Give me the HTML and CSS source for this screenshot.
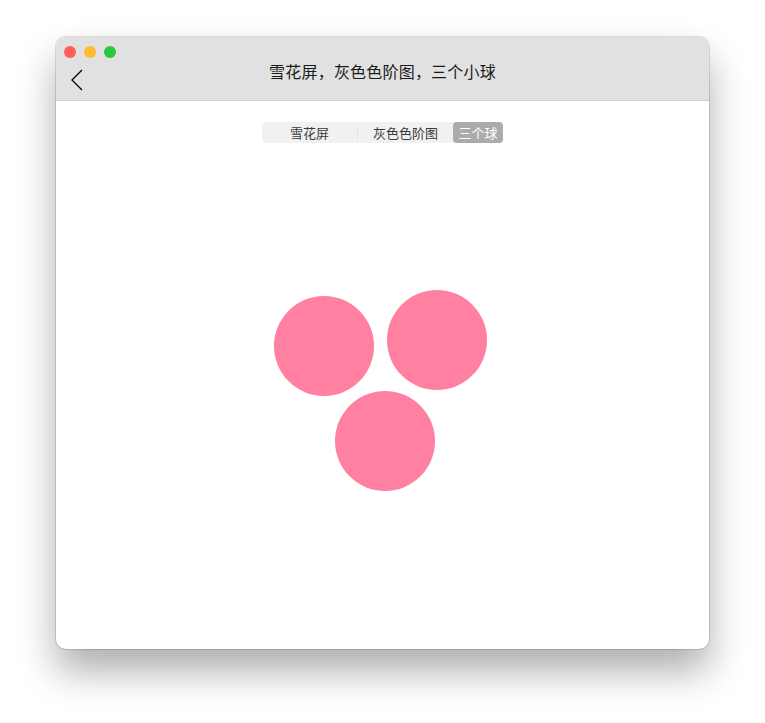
FILE: index.html
```html
<!DOCTYPE html>
<html lang="zh">
<head>
<meta charset="utf-8">
<link rel="stylesheet" href="styles.css">
</head>
<body>
<div class="window">
  <div class="titlebar">
    <div class="lights">
      <span class="light red"></span>
      <span class="light yellow"></span>
      <span class="light green"></span>
    </div>
    <div class="navrow">
      <svg class="back" width="14" height="22" viewBox="0 0 14 22"><path d="M12 1 L2 11 L12 21" fill="none" stroke="#000" stroke-width="1.3"/></svg>
      <div class="title">雪花屏，灰色色阶图，三个小球</div>
    </div>
  </div>
  <div class="content">
    <div class="segmented">
      <div class="seg seg-wide">雪花屏</div>
      <div class="sep"></div>
      <div class="seg seg-wide">灰色色阶图</div>
      <div class="seg seg-selected">三个球</div>
    </div>
    <div class="canvas">
      <div class="ball b1"></div>
      <div class="ball b2"></div>
      <div class="ball b3"></div>
    </div>
  </div>
</div>
</body>
</html>
```
FILE: styles.css
```css
html, body {
  margin: 0;
  padding: 0;
  background: #ffffff;
  font-family: "Noto Sans CJK SC", "Noto Sans", sans-serif;
}
body {
  padding: 37px 0 0 56px;
  height: 723px;
  box-sizing: border-box;
}
.window {
  width: 653px;
  height: 612px;
  border-radius: 10px;
  background: #ffffff;
  box-shadow: 0 0 0 1px rgba(0,0,0,0.12), 0 22px 38px rgba(0,0,0,0.32);
  overflow: hidden;
  display: flex;
  flex-direction: column;
}
.titlebar {
  height: 63px;
  background: #e1e1e1;
  border-bottom: 1px solid #d1d1d1;
  display: flex;
  flex-direction: column;
}
.lights {
  display: flex;
  gap: 8px;
  padding: 9px 0 0 8px;
  height: 12px;
}
.light {
  width: 12px;
  height: 12px;
  border-radius: 50%;
}
.red { background: #fe5f57; }
.yellow { background: #febc2e; }
.green { background: #28c840; }
.navrow {
  position: relative;
  height: 40px;
  display: flex;
  align-items: center;
  justify-content: center;
}
.back {
  position: absolute;
  left: 14px;
  top: 11px;
}
.title {
  font-size: 16px;
  letter-spacing: 0.2px;
  color: #1a1a1a;
  margin-top: -14px;
}
.content {
  flex: 1;
  display: flex;
  flex-direction: column;
  align-items: center;
}
.segmented {
  margin-top: 21px;
  display: flex;
  align-items: center;
  height: 21px;
  background: #f1f1f1;
  border-radius: 5px;
  font-size: 13px;
  color: #3a3a3a;
}
.seg {
  height: 21px;
  display: flex;
  align-items: center;
  justify-content: center;
}
.seg-wide { width: 95px; }
.sep {
  width: 1px;
  height: 12px;
  background: #e0e0e0;
}
.seg-selected {
  width: 50px;
  background: #ababab;
  color: #ffffff;
  border-radius: 4px;
}
.canvas {
  position: relative;
  width: 653px;
  flex: 1;
}
.ball {
  position: absolute;
  width: 100px;
  height: 100px;
  border-radius: 50%;
  background: #ff80a0;
}
.b1 { left: 218px; top: 153px; }
.b2 { left: 331px; top: 147px; }
.b3 { left: 279px; top: 248px; }
```
